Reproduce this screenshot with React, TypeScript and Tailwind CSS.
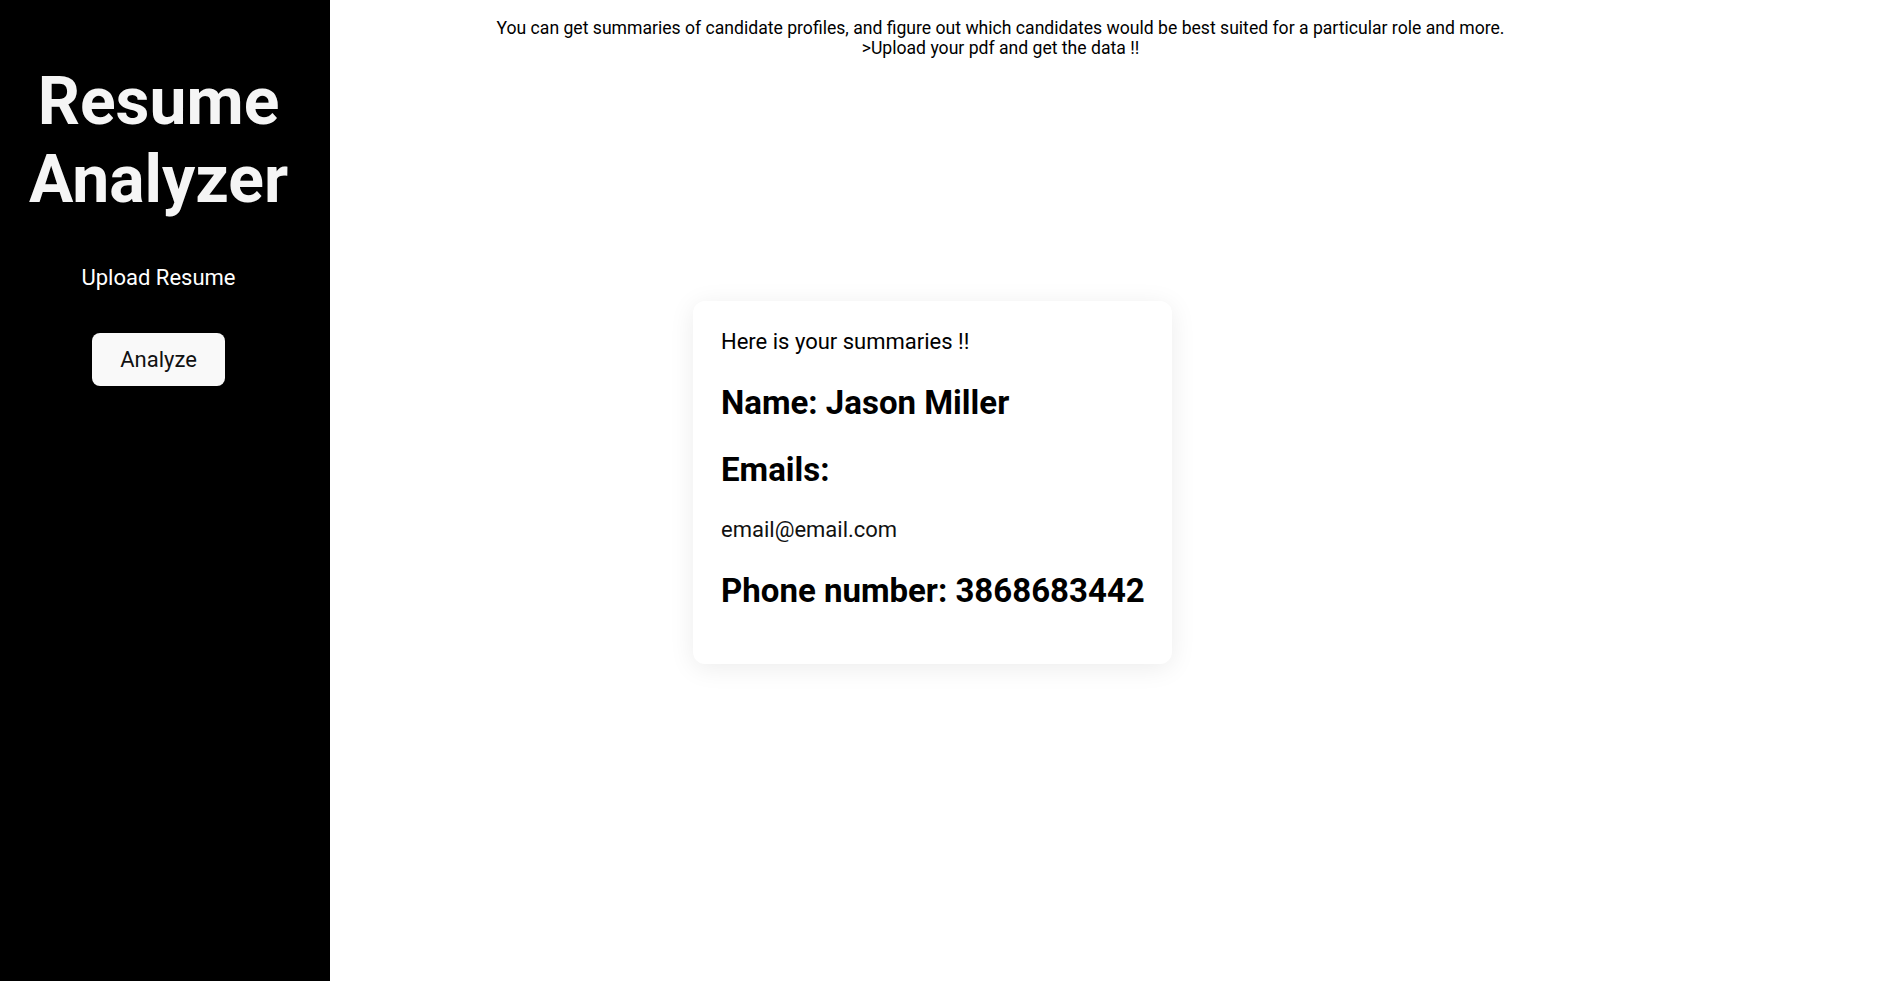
import { useState } from "react";

type Summary = {
  name: string;
  emails: string[];
  phone: string;
};

const summary: Summary = {
  name: "Jason Miller",
  emails: ["email@email.com"],
  phone: "3868683442",
};

function Sidebar() {
  const [fileName, setFileName] = useState<string | null>(null);

  return (
    <aside className="w-[330px] shrink-0 bg-black flex flex-col items-center pr-[13px] pt-[63px]">
      <h1 className="text-[66px] leading-[78px] font-bold text-[#f5f5f5] text-center">
        Resume
        <br />
        Analyzer
      </h1>
      <label className="mt-[46px] text-[22px] leading-[26px] text-white cursor-pointer">
        {fileName ?? "Upload Resume"}
        <input
          type="file"
          accept="application/pdf"
          className="hidden"
          onChange={(e) => setFileName(e.target.files?.[0]?.name ?? null)}
        />
      </label>
      <button className="mt-[42px] w-[133px] h-[53px] rounded-[8px] bg-[#f9f9f9] text-[22px] leading-[26px] text-[#111] flex items-center justify-center cursor-pointer">
        Analyze
      </button>
    </aside>
  );
}

function SummaryCard({ data }: { data: Summary }) {
  return (
    <div className="ml-[363px] mt-[243px] w-[479px] bg-white rounded-[12px] shadow-[0_4px_26px_rgba(0,0,0,0.08)] px-[28px] pt-[28px] pb-[54px] flex flex-col gap-[28px] text-black">
      <p className="text-[22px] leading-[26px]">Here is your summaries !!</p>
      <h2 className="text-[33px] leading-[39px] font-bold">Name: {data.name}</h2>
      <h2 className="text-[33px] leading-[39px] font-bold">Emails:</h2>
      {data.emails.map((mail) => (
        <p key={mail} className="text-[22px] leading-[26px] text-[#111]">
          {mail}
        </p>
      ))}
      <h2 className="text-[33px] leading-[39px] font-bold whitespace-nowrap">
        Phone number: {data.phone}
      </h2>
    </div>
  );
}

export default function App() {
  return (
    <div className="flex w-[1975px] h-[997px] bg-white font-[family-name:Roboto,sans-serif]">
      <Sidebar />
      <main className="flex flex-col">
        {/* intro */}
        <div className="w-[1341px] pt-[19px] text-center text-[17.6px] leading-[19.5px] text-black">
          <p>
            You can get summaries of candidate profiles, and figure out which
            candidates would be best suited for a particular role and more.
          </p>
          <p>&gt;Upload your pdf and get the data !!</p>
        </div>
        <SummaryCard data={summary} />
      </main>
    </div>
  );
}
